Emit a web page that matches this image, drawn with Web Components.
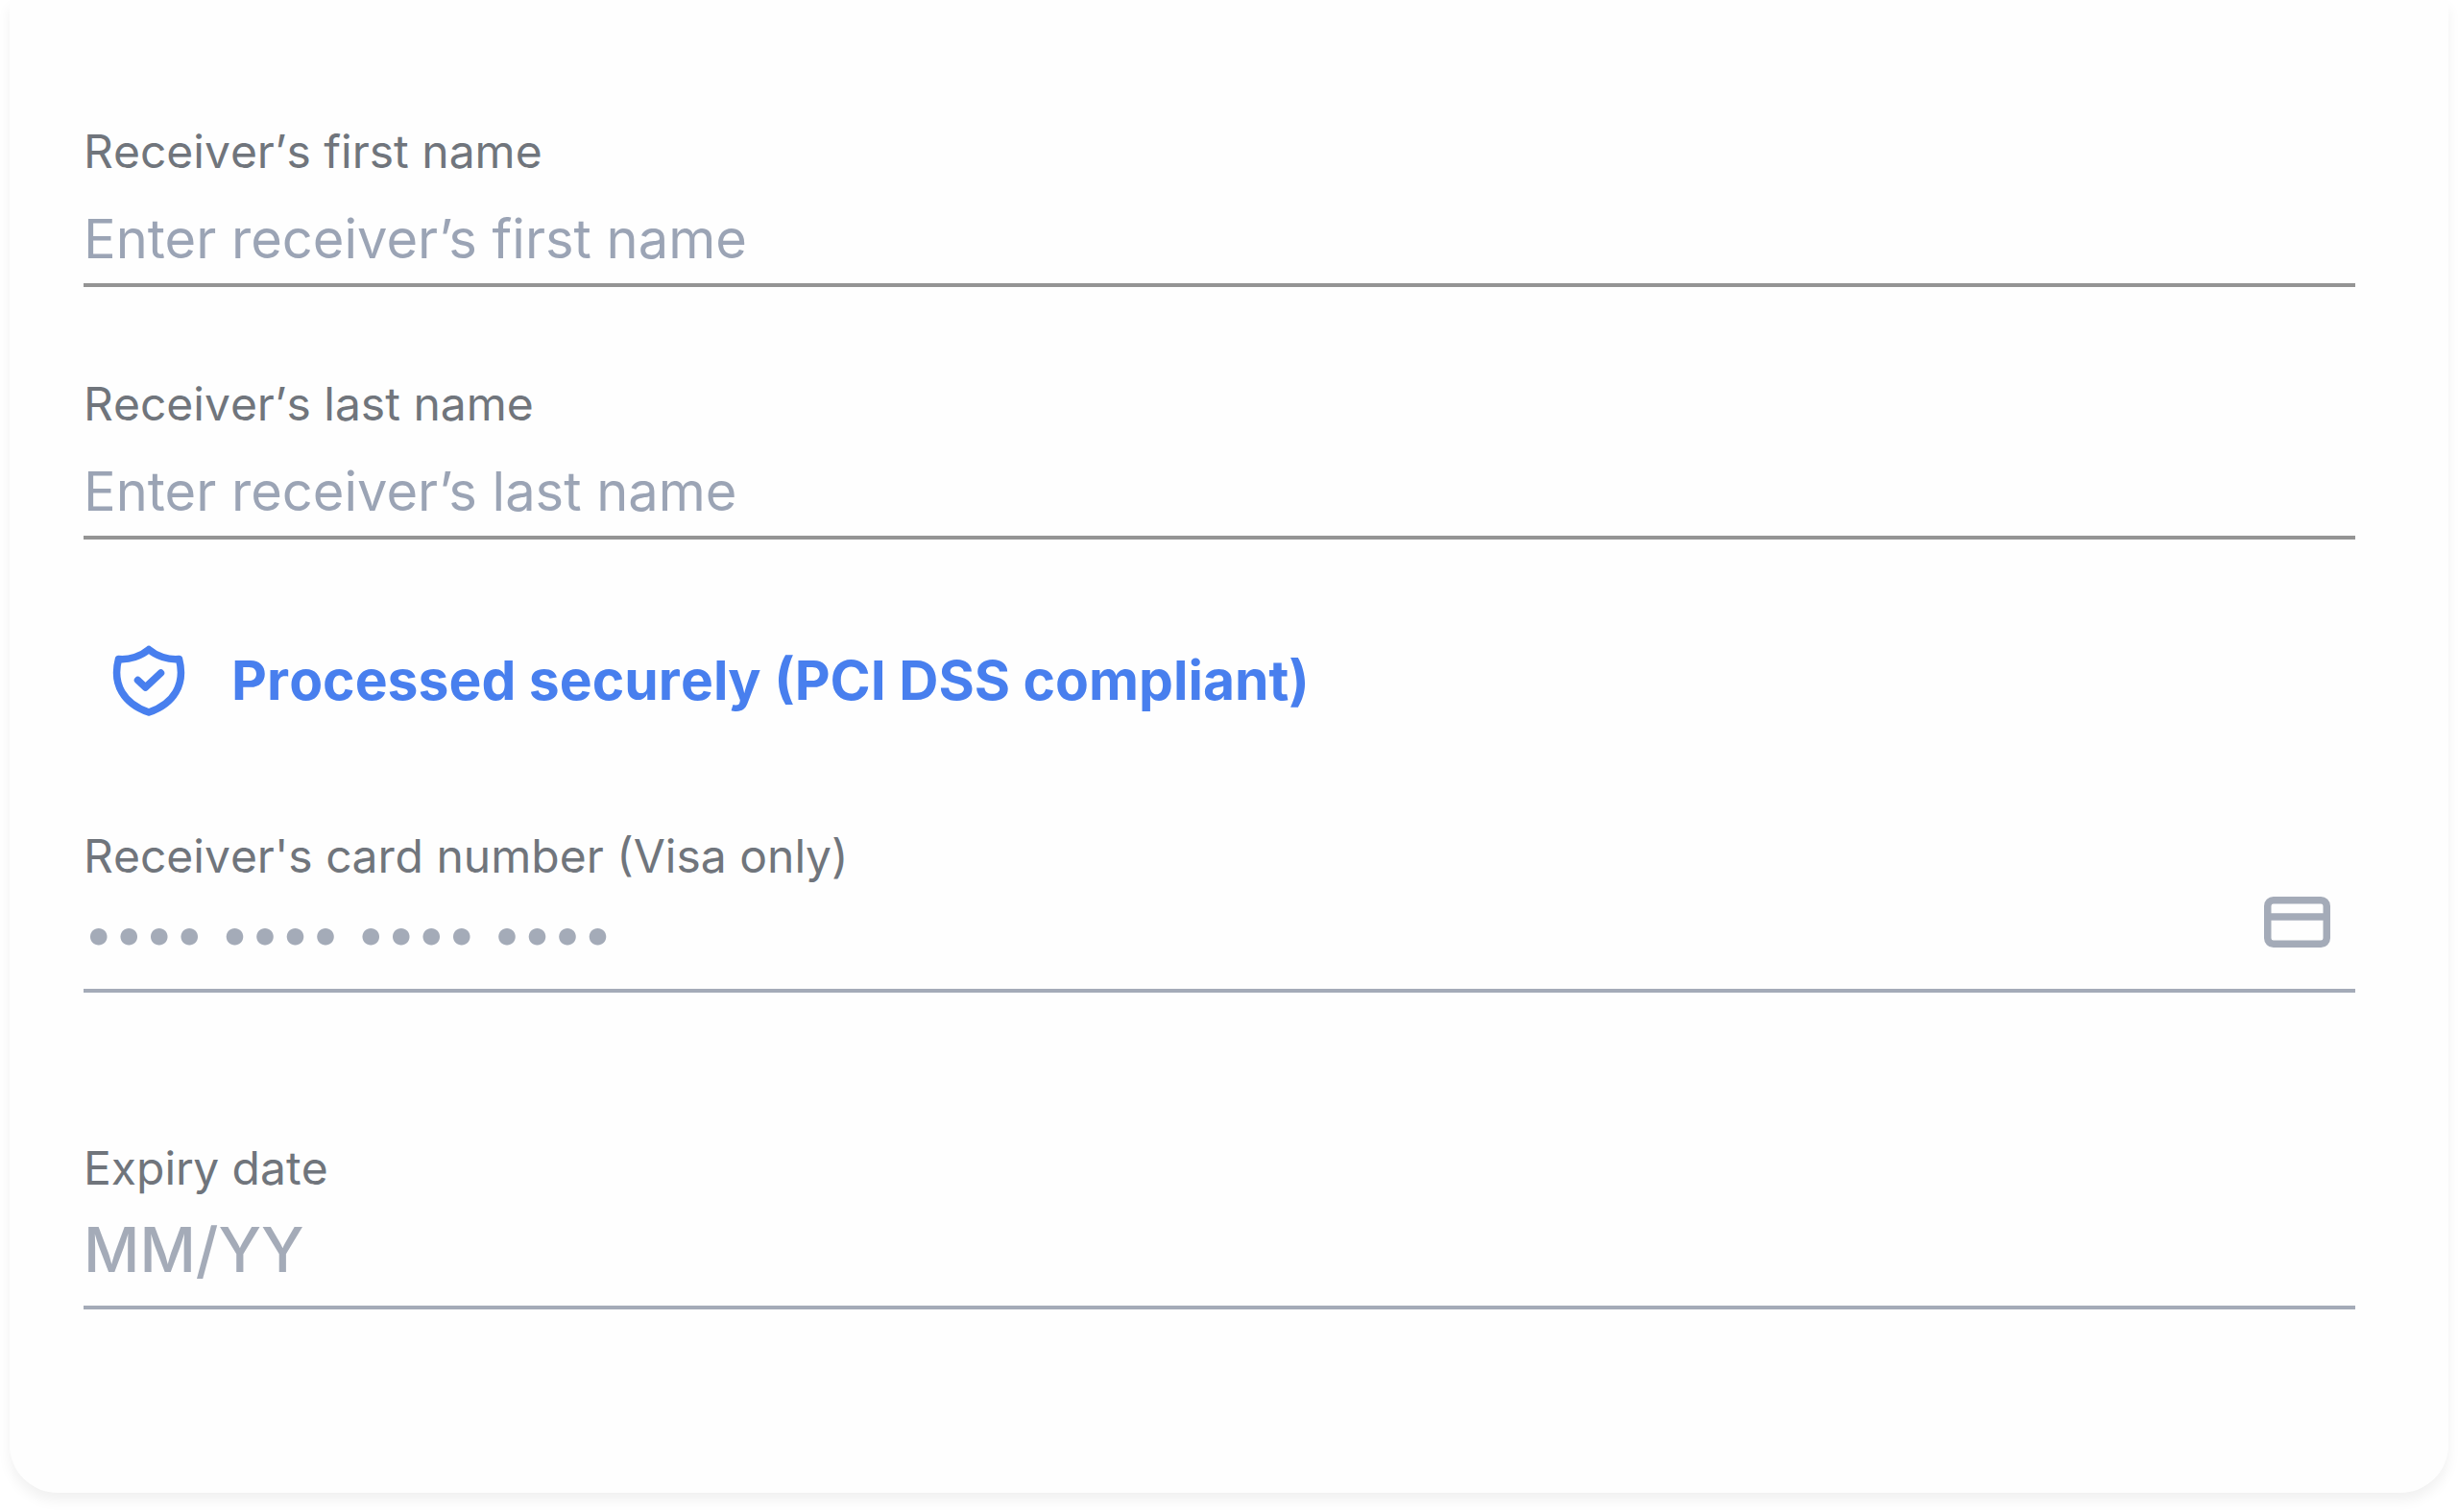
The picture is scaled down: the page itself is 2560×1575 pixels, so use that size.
<!DOCTYPE html>
<html lang="en">
<head>
<meta charset="utf-8">
<meta name="viewport" content="width=device-width, initial-scale=1">
<title>Receiver details</title>
<style>
  body { margin: 0; background: #fff; font-family: Inter, "Liberation Sans", sans-serif; color: #70757c; }
</style>
</head>
<body>
<form-card>
  <field-group>
    <text-field label="Receiver’s first name" placeholder="Enter receiver’s first name"></text-field>
    <text-field label="Receiver’s last name" placeholder="Enter receiver’s last name"></text-field>
  </field-group>
  <secure-note>Processed securely (PCI DSS compliant)</secure-note>
  <text-field variant="card" label="Receiver's card number (Visa only)" placeholder="•••• •••• •••• ••••"><card-icon></card-icon></text-field>
  <text-field variant="date" label="Expiry date" placeholder="MM/YY"></text-field>
</form-card>

<script>
class FormCard extends HTMLElement {
  constructor() {
    super();
    this.attachShadow({ mode: "open" }).innerHTML = `
      <style>
        :host { display: block; padding: 0 10px 20px; }
        form {
          display: flex; flex-direction: column;
          padding: 128px 97px 191px 77px;
          border-radius: 0 0 50px 50px; background: #fefefe;
          box-shadow: 0 8px 14px rgba(0, 0, 0, 0.06);
        }
      </style>
      <form><slot></slot></form>`;
  }
}

class FieldGroup extends HTMLElement {
  constructor() {
    super();
    this.attachShadow({ mode: "open" }).innerHTML = `
      <style>:host { display: flex; flex-direction: column; gap: 92px; }</style>
      <slot></slot>`;
  }
}

class TextField extends HTMLElement {
  constructor() {
    super();
    this.attachShadow({ mode: "open" }).innerHTML = `
      <style>
        :host { display: block; --tone: #9ba4b5; --line: #949494; --size: 56px; --weight: 400; --kerning: auto; --row: 107px; --space-above: 27px; --space-below: 12px; }
        :host([variant="card"]) { --tone: #a4abb8; --line: #a4abb8; --row: 108px; --space-above: 0px; --space-below: 8px; }
        :host([variant="date"]) { --tone: #a4abb8; --line: #a4abb8; --size: 64px; --weight: 500; --kerning: none; --row: 113px; --space-above: 0px; --space-below: 4px; margin-top: 153px; }
        label { display: block; font-size: 48px; line-height: 60px; font-kerning: none; }
        .row {
          display: flex; align-items: center; box-sizing: content-box;
          height: calc(var(--row) - var(--space-above) - var(--space-below));
          padding: var(--space-above) 0 var(--space-below);
          border-bottom: 4px solid var(--line);
        }
        input {
          flex: 1; min-width: 0; height: 68px; margin: 0; padding: 0; border: 0; outline: 0; background: none;
          font: var(--weight) var(--size)/68px Inter, "Liberation Sans", sans-serif; color: #4b5563;
          font-kerning: var(--kerning);
        }
        input::placeholder { color: var(--tone); opacity: 1; }
        ::slotted(card-icon) { margin: 0 26px 24px 0; }
      </style>
      <label for="control"></label>
      <div class="row"><input id="control" type="text" autocomplete="off"><slot></slot></div>`;
  }
  connectedCallback() {
    this.shadowRoot.querySelector("label").textContent = this.getAttribute("label");
    this.shadowRoot.querySelector("input").placeholder = this.getAttribute("placeholder");
  }
}

class SecureNote extends HTMLElement {
  constructor() {
    super();
    this.attachShadow({ mode: "open" }).innerHTML = `
      <style>
        :host { display: flex; align-items: center; gap: 48px; margin: 110px 0 116px; padding-left: 30px; color: #487fee; font-size: 57px; line-height: 68px; font-weight: 700; font-kerning: none; }
        svg { flex: none; width: 76px; height: 74px; }
      </style>
      <svg viewBox="0 0 76 74" fill="none" stroke="currentColor" stroke-width="7.500" stroke-linecap="round" stroke-linejoin="round" aria-hidden="true">
        <path d="M38 4.500C30 11.500 18 15.500 6.500 14.500C-.5 41 12 61 38 70C64 61 76.500 41 69.500 14.500C58 15.500 46 11.500 38 4.500Z"/>
        <path d="M26.500 36.500L34.500 44L50.500 29"/>
      </svg>
      <span><slot></slot></span>`;
  }
}

class CardIcon extends HTMLElement {
  constructor() {
    super();
    this.attachShadow({ mode: "open" }).innerHTML = `
      <style>
        :host { display: block; flex: none; color: #a4abb8; }
        svg { display: block; width: 69px; height: 53px; }
      </style>
      <svg viewBox="0 0 69 53" fill="none" stroke="currentColor" stroke-width="7.500" aria-hidden="true">
        <rect x="3.750" y="3.750" width="61.500" height="45.500" rx="6"/>
        <path d="M3.500 21H65.500"/>
      </svg>`;
  }
}

customElements.define("form-card", FormCard);
customElements.define("field-group", FieldGroup);
customElements.define("text-field", TextField);
customElements.define("secure-note", SecureNote);
customElements.define("card-icon", CardIcon);
</script>
</body>
</html>
